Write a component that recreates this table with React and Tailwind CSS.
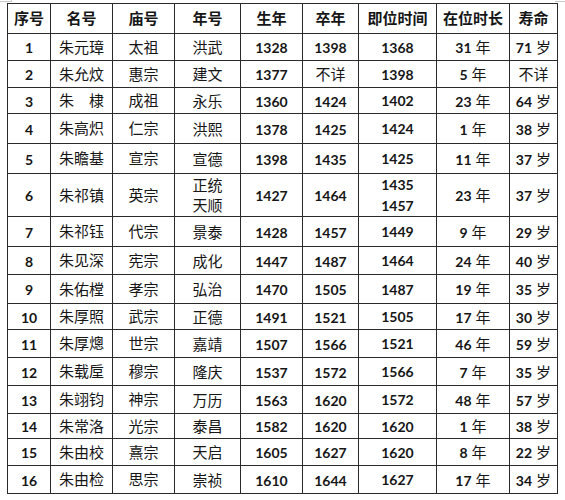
const ROWS = [
  ['1', '朱元璋', '太祖', ['洪武'], '1328', '1398', ['1368'], '31', '71', 27],
  ['2', '朱允炆', '惠宗', ['建文'], '1377', '不详', ['1398'], '5', null, 27],
  ['3', '朱　棣', '成祖', ['永乐'], '1360', '1424', ['1402'], '23', '64', 26],
  ['4', '朱高炽', '仁宗', ['洪熙'], '1378', '1425', ['1424'], '1', '38', 30],
  ['5', '朱瞻基', '宣宗', ['宣德'], '1398', '1435', ['1425'], '11', '37', 30],
  ['6', '朱祁镇', '英宗', ['正统', '天顺'], '1427', '1464', ['1435', '1457'], '23', '37', 42],
  ['7', '朱祁钰', '代宗', ['景泰'], '1428', '1457', ['1449'], '9', '29', 30],
  ['8', '朱见深', '宪宗', ['成化'], '1447', '1487', ['1464'], '24', '40', 28],
  ['9', '朱佑樘', '孝宗', ['弘治'], '1470', '1505', ['1487'], '19', '35', 29],
  ['10', '朱厚照', '武宗', ['正德'], '1491', '1521', ['1505'], '17', '30', 26],
  ['11', '朱厚熜', '世宗', ['嘉靖'], '1507', '1566', ['1521'], '46', '59', 28],
  ['12', '朱载垕', '穆宗', ['隆庆'], '1537', '1572', ['1566'], '7', '35', 28],
  ['13', '朱翊钧', '神宗', ['万历'], '1563', '1620', ['1572'], '48', '57', 28],
  ['14', '朱常洛', '光宗', ['泰昌'], '1582', '1620', ['1620'], '1', '38', 25],
  ['15', '朱由校', '熹宗', ['天启'], '1605', '1627', ['1620'], '8', '22', 27],
  ['16', '朱由检', '思宗', ['崇祯'], '1610', '1644', ['1627'], '17', '34', 28],
];

const HEAD = ['序号', '名号', '庙号', '年号', '生年', '卒年', '即位时间', '在位时长', '寿命'];
const WIDTHS = ['w-[43px]', 'w-[62px]', 'w-[62px]', 'w-[66px]', 'w-[62px]', 'w-[56px]', 'w-[78px]', 'w-[73px]', 'w-[48px]'];

const cjk = "font-['Noto_Sans_CJK_SC',sans-serif] text-[15px]";
const num = "font-['Lato','Noto_Sans_CJK_SC',sans-serif] font-bold text-[14px]";
const cell = 'border-[1.5px] border-[#2a2a2a] text-center align-middle p-0';

function Num({ children }) {
  return <span className={num}>{children}</span>;
}

function Unit({ n, u }) {
  return (
    <span className="inline-flex items-baseline gap-[4px]">
      <Num>{n}</Num>
      <span className={cjk}>{u}</span>
    </span>
  );
}

export default function App() {
  return (
    <div className="relative w-[565px] h-[500px] bg-white pl-[7px] pt-[3px] text-[#161616]">
      <div className="absolute left-0 top-[1px] w-[12px] h-px bg-[#c8c8c8]" />
      <div className="absolute left-[11px] top-0 w-px h-[2px] bg-[#c8c8c8]" />
      <div className="absolute right-0 top-[1px] w-[10px] h-px bg-[#c8c8c8]" />
      <table className="w-[550px] border-collapse table-fixed">
        <thead>
          <tr>
            {HEAD.map((h, i) => (
              <th key={h} className={`${cell} ${WIDTHS[i]} h-[30px] ${cjk} font-bold`}>
                {h}
              </th>
            ))}
          </tr>
        </thead>
        <tbody>
          {ROWS.map(([no, name, temple, eras, born, died, accede, reign, age, h]) => (
            <tr key={no} style={{ height: h }}>
              <td className={cell}><Num>{no}</Num></td>
              <td className={`${cell} ${cjk}`}>{name}</td>
              <td className={`${cell} ${cjk}`}>{temple}</td>
              <td className={`${cell} ${cjk} leading-[20px]`}>
                {eras.map((e) => <div key={e}>{e}</div>)}
              </td>
              <td className={cell}><Num>{born}</Num></td>
              <td className={cell}>
                {died === '不详' ? <span className={cjk}>不详</span> : <Num>{died}</Num>}
              </td>
              <td className={`${cell} leading-[20px]`}>
                {accede.map((a) => <div key={a}><Num>{a}</Num></div>)}
              </td>
              <td className={cell}><Unit n={reign} u="年" /></td>
              <td className={cell}>
                {age ? <Unit n={age} u="岁" /> : <span className={cjk}>不详</span>}
              </td>
            </tr>
          ))}
        </tbody>
      </table>
    </div>
  );
}
